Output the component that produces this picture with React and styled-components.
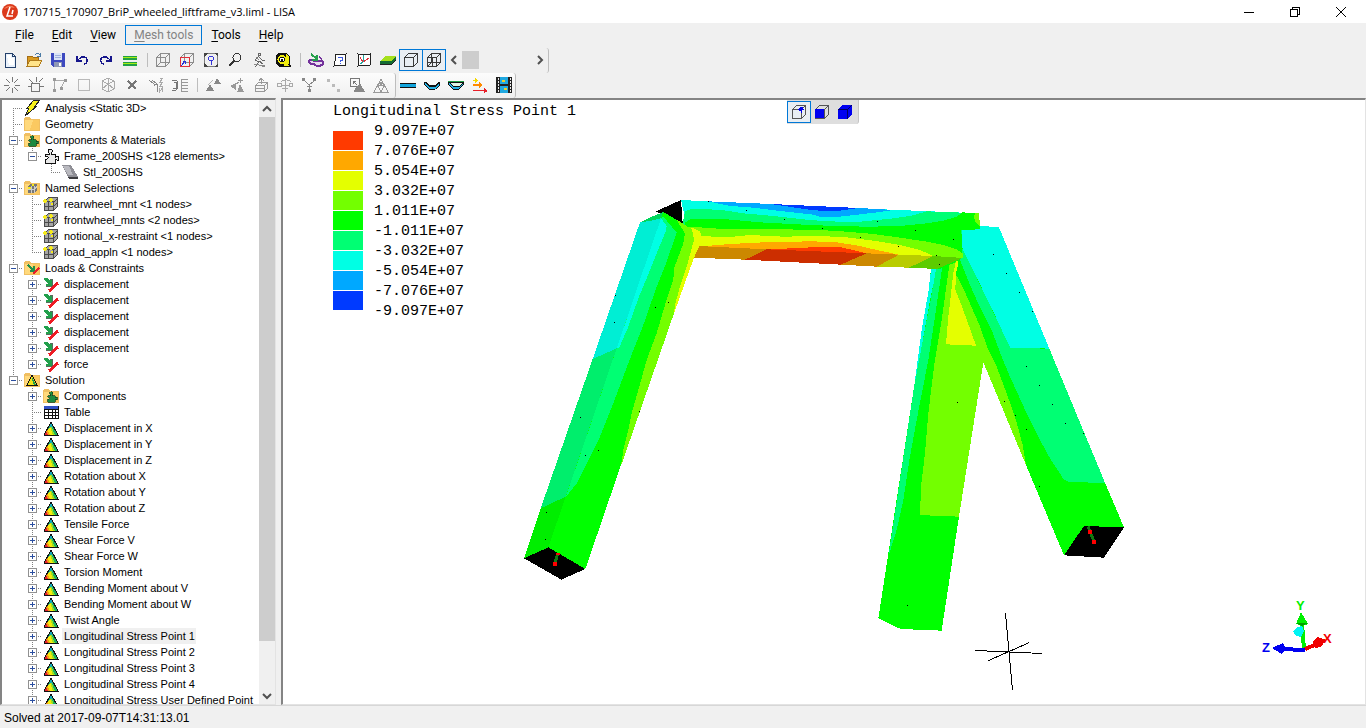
import React, { useState } from 'react';
import styled, { createGlobalStyle, css } from 'styled-components';

const GlobalStyle = createGlobalStyle`
  * { box-sizing: border-box; }
  body {
    margin: 0;
    background: #f0f0f0;
    color: #000;
    font-family: Roboto, "Liberation Sans", sans-serif;
    font-size: 12px;
    overflow: hidden;
  }
  button { font: inherit; color: inherit; padding: 0; border: 0; background: none; }
`;

const Window = styled.div`
  display: flex;
  flex-direction: column;
  height: 100vh;
`;

const TitleBar = styled.header`
  display: flex;
  align-items: center;
  flex: none;
  height: 23px;
  padding: 0 2px;
  background: #fff;
`;

const Title = styled.h1`
  flex: 1;
  margin: 0 0 0 5px;
  font-family: "Open Sans", Roboto, sans-serif;
  font-size: 11px;
  font-weight: 400;
  line-height: 16px;
`;

const WindowButton = styled.button`
  display: flex;
  align-items: center;
  justify-content: center;
  width: 46px;
  height: 20px;
`;

const MenuBar = styled.nav`
  display: flex;
  align-items: center;
  flex: none;
  height: 25px;
  padding: 0 0 1px 6px;
`;

const MenuItem = styled.button`
  height: 20px;
  padding: 0 8px;
  border: 1px solid ${p => (p.$active ? '#0078d7' : 'transparent')};
  color: ${p => (p.$active ? '#838383' : '#000')};
  line-height: 18px;
  u { text-underline-offset: 2px; }
`;

const ToolRow = styled.div`
  display: flex;
  flex: none;
  gap: 3px;
  height: 25px;
`;

const Strip = styled.div`
  display: flex;
  align-items: center;
  padding: 0 ${p => p.$right || 0}px 2px ${p => p.$left || 0}px;
  border-right: 1px solid #bdbdbd;
  border-radius: 0 3px 3px 0;
  background: ${p => (p.$flat ? '#f0f0f0' : 'linear-gradient(#fcfcfc, #f0f0f0)')};
`;

const ToolGroup = styled.div`
  display: flex;
  gap: ${p => (p.$tight ? 0 : 6)}px;
  margin-left: ${p => (p.$tight ? 2 : 0)}px;
`;

const ToolButton = styled.button`
  display: flex;
  align-items: center;
  justify-content: center;
  width: 18px;
  height: 22px;
  ${p => p.$boxed && css`
    width: 24px;
    border: 1px solid ${p.$on ? '#0078d7' : 'transparent'};
    background: ${p.$on ? '#e9eef3' : 'transparent'};
    &:not(:first-child) { margin-left: -1px; }
  `}
`;

const Separator = styled.div`
  width: 1px;
  height: 14px;
  margin: 0 6px 0 8px;
  background: #bdbdbd;
`;

const Slider = styled.div`
  display: flex;
  align-items: center;
  justify-content: space-between;
  width: 102px;
  height: 20px;
`;

const SliderTrack = styled.div`
  flex: 1;
  height: 18px;
`;

const SliderThumb = styled.div`
  width: 17px;
  height: 18px;
  background: #cdcdcd;
`;

const ArrowButton = styled.button`
  display: flex;
  align-items: center;
  justify-content: center;
  width: 16px;
  height: 17px;
`;

const Workspace = styled.main`
  display: flex;
  flex: 1;
  min-height: 0;
  gap: 5px;
`;

const Sunken = styled.section`
  border: 2px solid;
  border-width: 2px 1px 1px 2px;
  border-color: #848484 #e3e3e3 #e3e3e3 #848484;
  background: #fff;
  overflow: hidden;
`;

const TreePanel = styled(Sunken)`
  display: flex;
  flex: none;
  width: 276px;
`;

const Tree = styled.ul`
  flex: 1;
  margin: 0;
  padding: 0 0 0 2px;
  overflow: hidden;
  list-style: none;
`;

const TreeRow = styled.li`
  display: flex;
  height: 16px;
  white-space: nowrap;
`;

const dotsV = 'repeating-linear-gradient(#808080 0 1px, transparent 1px 2px)';
const dotsH = 'repeating-linear-gradient(90deg, #808080 0 1px, transparent 1px 2px)';

const lines = {
  none: 'none',
  pass: `${dotsV} 9px 0 / 1px 16px no-repeat`,
  first: `${dotsV} 9px 8px / 1px 8px no-repeat, ${dotsH} 9px 8px / 10px 1px no-repeat`,
  tee: `${dotsV} 9px 0 / 1px 16px no-repeat, ${dotsH} 9px 8px / 10px 1px no-repeat`,
  end: `${dotsV} 9px 0 / 1px 9px no-repeat, ${dotsH} 9px 8px / 10px 1px no-repeat`,
};

const Guide = styled.span`
  display: flex;
  flex: none;
  align-items: center;
  justify-content: center;
  width: 19px;
  height: 16px;
  padding-top: 1px;
  background: ${p => lines[p.$line]};
`;

const Expander = styled.button`
  display: flex;
  width: 9px;
  height: 9px;
  background: #fff;
`;

const TreeIcon = styled.span`
  display: flex;
  flex: none;
  width: 16px;
  margin: 0 3px 0 1px;
`;

const TreeLabel = styled.span`
  padding: 0 1px 0 2px;
  font-family: "Liberation Sans", sans-serif;
  font-size: 11px;
  line-height: 16px;
  background: ${p => (p.$selected ? '#f0f0f0' : 'transparent')};
`;

const ScrollBar = styled.div`
  display: flex;
  flex-direction: column;
  flex: none;
  width: 16px;
  background: #f0f0f0;
`;

const ScrollTrack = styled.div`
  flex: 1;
`;

const ScrollThumb = styled.div`
  height: 92%;
  background: #cdcdcd;
`;

const Viewport = styled(Sunken)`
  position: relative;
  flex: 1;
  min-width: 0;
  padding: 2px 0 0 50px;
`;

const Model = styled.svg`
  position: absolute;
  inset: 0;
  width: 100%;
  height: 100%;
`;

const Legend = styled.div`
  position: relative;
  font-family: "Liberation Mono", monospace;
  font-size: 15px;
  line-height: 20px;
`;

const LegendBody = styled.div`
  display: flex;
  gap: 11px;
`;

const LegendTitle = styled.div`
  height: 20px;
`;

const Swatches = styled.div`
  padding-top: 9px;
`;

const Swatch = styled.div`
  width: 30px;
  height: 19px;
  margin-bottom: 1px;
  background: ${p => p.$color};
`;

const ViewBar = styled.div`
  position: absolute;
  top: 0;
  left: 504px;
  display: flex;
  align-items: center;
  height: 24px;
  padding-right: 1px;
  border-right: 1px solid #c4c4c4;
  border-radius: 0 0 3px 0;
  background: #dedede;
`;

const StatusBar = styled.footer`
  flex: none;
  height: 23px;
  padding: 0 4px;
  border-top: 1px solid #d7d7d7;
  font-family: "Liberation Sans", sans-serif;
  font-size: 12px;
  line-height: 24px;
`;

const Pic = ({ children, size = 16, smooth }) => (
  <svg width={size} height={size} viewBox="0 0 16 16" fill="none" aria-hidden="true"
    shapeRendering={smooth ? 'auto' : 'crispEdges'}>
    {children}
  </svg>
);

const cubeLines = 'M1.5 5.5h9v9h-9zM1.5 5.5l4-4h9l-4 4M14.5 1.5v9l-4 4';
const puzzle = 'M2 6h4V5L5 4V2l1-1h2l1 1v2L8 5v1h4v3h1l1-1h1v4h-1l-1-1h-1v4H2v-4h2l1-1V9L4 8H2z';
const folder = (
  <>
    <path d="M0 3l1-2h5l1 2h9v12H0z" fill="#f0bf62" />
    <path d="M1 4h14v10H1z" fill="#ffd97c" />
    <path d="M9 4h6v10H6z" fill="#fbc961" />
  </>
);

const icons = {
  new: (
    <>
      <path d="M3 1h7l3 3v11H3z" fill="#e9f1fb" stroke="#24406b" />
      <path d="M5 3h4v3h3v7H7z" fill="#fff" />
      <path d="M10 1v3h3" stroke="#24406b" />
    </>
  ),
  open: (
    <>
      <path d="M1 4h5l1 1h5v9H1z" fill="#d99a20" stroke="#a36c14" />
      <path d="M4 8h12l-3 6H1z" fill="#ffe48a" stroke="#b07c1c" />
      <path d="M9 3c1-2 3-2 5 0m0-2v3h-3" stroke="#4b7ba5" />
    </>
  ),
  save: (
    <>
      <path d="M1 1h14v14H3l-2-2z" fill="#3d49c0" />
      <path d="M4 1h8v7H4z" fill="#dbe4f7" />
      <path d="M5 3h6M5 5h6" stroke="#9fb0dc" />
      <path d="M4 10h8v5H4z" fill="#8e97b5" />
      <path d="M9 11h2v3H9z" fill="#fff" />
    </>
  ),
  undo: <path d="M3 4v5h5M3 9l3-3c3-2 6-1 7 1 1 3-1 5-3 5" stroke="#15158c" strokeWidth="1.4" />,
  redo: <path d="M13 4v5H8m5 0l-3-3C7 4 4 5 3 7c-1 3 1 5 3 5" stroke="#15158c" strokeWidth="1.4" />,
  equals: (
    <>
      <path d="M1 4h14v4H1zM1 10h14v4H1z" fill="#22a046" />
      <path d="M1 5h14v1H1zM1 11h14v1H1z" fill="#a6ee12" />
    </>
  ),
  wire: <path d={cubeLines + 'M5.5 1.5v9h9M5.5 10.5l-4 4'} stroke="#8c8c8c" />,
  wireRed: (
    <>
      <path d={cubeLines + 'M5.5 1.5v9h9'} stroke="#8c8c8c" />
      <path d="M1.5 5.5h9v9h-9z" stroke="#e0303a" />
      <path d="M2 14l4-5M6 12V9H4" stroke="#2230e0" />
    </>
  ),
  fit: (
    <>
      <path d="M1.5 1.5h13v13h-13z" stroke="#7b7b7b" />
      <path d="M1 1h4L1 5zM15 1h-4l4 4zM1 15h4l-4-4zM15 15h-4l4-4z" fill="#444" />
      <circle cx="8" cy="6.5" r="2.5" stroke="#3434d8" />
      <path d="M8 9v4" stroke="#3434d8" />
    </>
  ),
  zoom: (
    <>
      <circle cx="10" cy="5.5" r="4" stroke="#333" />
      <path d="M7 9l-5 5" stroke="#333" strokeWidth="2" />
    </>
  ),
  walk: (
    <>
      <path d="M7 1.5h2v2H7zM8 4l-4 4 4 2-4 5M8 5l3 3h3M8 9l4 3" stroke="#666" />
      <path d="M3 12l5 1 6 1-3 1M5 5l3 3" stroke="#888" />
    </>
  ),
  tape: (
    <>
      <path d="M3 1h8l4 4v8h1v2H5l-4-3V4z" fill="#111" />
      <path d="M11 2l3 3v6l-2 2 3 1H9z" fill="#f2ee10" />
      <circle cx="7" cy="7.5" r="4.5" fill="#f2ee10" />
      <circle cx="7" cy="7.5" r="2.500" fill="#fff" stroke="#111" />
      <path d="M6 7h2v2H6z" fill="#111" />
    </>
  ),
  mask: (
    <>
      <path d="M1 9c2-2 4 0 7 0s6-1 7 1-2 4-5 4-3-2-5-2-5-1-4-3z" fill="#e8dcf0" stroke="#73329b" strokeWidth="2" />
      <path d="M3 2l6 5M9 3v5H4" stroke="#26a04c" strokeWidth="2" />
      <path d="M11 4l3 4" stroke="#73329b" />
    </>
  ),
  ask: (
    <>
      <path d="M3 2l4 1 7-1-1 5 1 5-1 2-5-1-6 1 1-5z" fill="#fff" stroke="#222" />
      <path d="M6 5h4v3H8v2M8 11v1" stroke="#3c5be0" />
    </>
  ),
  plot: (
    <>
      <path d="M2 2l5 1 7-1v5l1 5-2 2-5-1-6 1 1-5z" fill="#fff" stroke="#222" />
      <path d="M4 5l3 5 6-4" stroke="#e0303a" />
      <path d="M7 3v7l-3 2" stroke="#22a8a0" />
    </>
  ),
  slab: (
    <>
      <path d="M5 4h11l-4 5H0z" fill="#a5e01c" />
      <path d="M0 9h12l4-5v3l-4 5H0z" fill="#146b32" />
      <path d="M0 12h12l4-5v1l-4 5H0z" fill="#222" />
    </>
  ),
  cube: <path d={cubeLines} stroke="#3a3a3a" />,
  cubeAll: <path d={cubeLines + 'M5.5 1.5v9h9M5.5 10.5l-4 4M1.5 10h9M6 5.5v9'} stroke="#3a3a3a" />,
  burst: <path d="M8 0v5M8 11v5M0 8h5M11 8h5M2 2l4 4M14 2l-4 4M2 14l4-4M14 14l-4-4" stroke="#777" />,
  burstBox: (
    <>
      <path d="M3.5 6.5h8v8h-8z" stroke="#777" />
      <path d="M8 0v5M1 2l4 4M15 1l-4 4M12 9h4M0 9h3" stroke="#777" />
    </>
  ),
  poly: (
    <>
      <path d="M3 3h10M3 3l-1 10M13 3L9 11" stroke="#aaa" />
      <path d="M1 1h3v3H1zM12 2h3v3h-3zM1 12h3v3H1zM8 10h3v3H8z" fill="#999" />
    </>
  ),
  square: <path d="M2.5 2.5h11v11h-11z" stroke="#b9b9b9" />,
  hex: <path d="M8 1l6 3v8l-6 3-6-3V4zM2 4l6 3 6-3M8 1v14M2 12l6-5 6 5" stroke="#ababab" />,
  cross: <path d="M4 4l8 8M12 4l-8 8" stroke="#777" strokeWidth="1.5" />,
  fork: (
    <>
      <path d="M1 3l5 4h3M4 3l5 4v8M6 7v2" stroke="#888" />
      <path d="M11.5 1.500h3l-3 4h3l-3 4h3M11.500 11v4l3-4v4" stroke="#aaa" />
    </>
  ),
  comb: (
    <>
      <path d="M0 3h4l2 2-1 3 1 3-2 2H0M2 5h2v6H1" stroke="#777" />
      <path d="M9 2h7M9 5h7M9 8h7M9 11h7M9 14h7M9.5 2v12" stroke="#999" />
    </>
  ),
  tri1: (
    <>
      <path d="M12 1l4 6H9zM5 7l4 7H1z" fill="#888" />
      <path d="M8 3L3 8" stroke="#b5b5b5" />
    </>
  ),
  tri2: (
    <>
      <path d="M1 9l6-3v7zM11 7l4 8H8z" fill="#999" />
      <path d="M11.500 1v5M9 3.500h5M7 7l3-2" stroke="#999" />
    </>
  ),
  box: <path d="M2.5 8.5h9v6h-9zM2.5 8.5l3-3h9l-3 3M14.5 5.5v6l-3 3M8.500 1v6M6 3.500l2-2 3 2M2 11.5h9" stroke="#999" />,
  spin: <path d="M.5 6.500h4v3h-4zM8.5 1v14M12.500 6.500h3v3h-3zM5 8.500h7M4 5c2-3 8-3 10 0M5 11.500h6" stroke="#aaa" />,
  merge: (
    <>
      <path d="M1 1h3v3H1zM12 1h3v3h-3zM7 12h3v3H7z" fill="#888" />
      <path d="M4 4l4 4 5-4M8.500 8v4M6 9.500h5" stroke="#888" />
    </>
  ),
  dots: <path d="M2 2h3v3H2zM7 7h3v3H7zM12 12h3v3h-3z" fill="#bbb" />,
  copy: (
    <>
      <path d="M1.5 1.5h9v8h-9zM4 4l4 4M4.500 7V4.500H7" stroke="#777" />
      <path d="M6 11l5-5 5 9H5z" fill="#888" />
    </>
  ),
  meshTri: <path d="M8 2l7 13H1zM4.5 8.5h7M8 15L4.5 8.5M8 15l3.5-6.5M6 5h4L8 8z" stroke="#999" />,
  bar: (
    <>
      <path d="M0 6h16v5H0z" fill="#111" />
      <path d="M0 7h16v3H0z" fill="#12a4dc" />
    </>
  ),
  sag: (
    <>
      <path d="M0 5h2l3 3h6l3-3h2v3l-4 4-2 1H6l-2-1-4-4z" fill="#111" />
      <path d="M1 6l4 4h6l4-4v2l-4 4H5L1 8z" fill="#25b2e6" />
    </>
  ),
  sagFull: (
    <>
      <path d="M0 4h16v3l-4 5-2 1H6l-2-1-4-5z" fill="#111" />
      <path d="M2 6h12l-3 3H5z" fill="#dff5e3" />
      <path d="M0 4h16v1H0z" fill="#22a046" />
      <path d="M1 6l4 4h6l4-4v1l-4 5H5L1 7z" fill="#25b2e6" />
    </>
  ),
  arrows: (
    <>
      <path d="M1 3h2V1l3 2-3 3V4H1z" fill="#f5d800" />
      <path d="M1 7h6V5l4 3-4 3V9H1z" fill="#ff8a00" />
      <path d="M1 13h11v-2l4 3-4 2v-2H1z" fill="#e8202a" />
    </>
  ),
  film: (
    <>
      <path d="M0 0h16v16H0z" fill="#222" />
      <path d="M4 0h8v7H4zM4 9h8v7H4z" fill="#20a8e0" />
      <path d="M2 1v14M14 1v14" stroke="#eee" strokeDasharray="2 1" />
      <path d="M6 3h3v2H6zM8 11h3v2H8z" fill="#f0d028" />
    </>
  ),
  cubeNode: (
    <>
      <path d={cubeLines} stroke="#555" />
      <circle cx="10" cy="5" r="2" fill="#0000e8" />
      <path d="M7 5h6M10 5v4" stroke="#0000e8" />
    </>
  ),
  cubeFace: (
    <>
      <path d={cubeLines} stroke="#555" />
      <path d="M1 5h9v9H1z" fill="#0000f0" />
    </>
  ),
  cubeSolid: (
    <>
      <path d="M1 5l4-4h10v9l-4 5H1z" fill="#0000f0" />
      <path d="M1 5.5h9.5L15 1M10.5 5.5V15" stroke="#000060" />
    </>
  ),
  bolt: (
    <path d="M10 0h6l-5 6h2L1 16l4-8H3z" fill="#f6f01a" stroke="#222" />
  ),
  folder,
  folderPart: (
    <>
      {folder}
      <path d={puzzle} transform="translate(3 3) scale(.75)" fill="#1c8a40" stroke="#0d3d1c" />
    </>
  ),
  part: <path d={puzzle} fill="#e9e9e9" stroke="#111" />,
  plate: (
    <>
      <path d="M0 1h9l7 12H6z" fill="#8f8f96" />
      <path d="M1 2h6l4 9H6z" fill="#b9b9bf" />
      <path d="M6 13h10v2H7z" fill="#3c3c40" />
    </>
  ),
  folderSel: (
    <>
      {folder}
      <path d="M4 6l2-2h7v6l-3 3H4z" fill="#777" />
      <path d="M4 9.500h6l3-3M7.500 6v7M10.500 6v7" stroke="#ccc" />
      <path d="M4 7h3v2H4zM8 4h2v2H8z" fill="#f5ea1c" />
    </>
  ),
  sel: (
    <>
      <path d="M1 5l4-4h10v9l-5 5H1z" fill="#4b4b4b" />
      <path d="M2 6h3v4H2zM6 6h4v4H6zM2 11h3v3H2zM6 11h4v3H6zM11 6l3-3v3l-3 3zM11 10l3-3v3l-3 3zM5 2h9l-3 3H3z" fill="#a5a5a5" />
      <path d="M1 3h2v1h1v2H3v1H1V6H0V4h1zM7 2h2v1h1v2H9v1H7V5H6V3h1zM8 7h2v2H8z" fill="#f5ea1c" />
    </>
  ),
  folderLoad: (
    <>
      {folder}
      <path d="M4 5l5 5M9.500 6v4.500H6" stroke="#22914a" strokeWidth="2" />
      <path d="M15 8l-6 6" stroke="#e8202a" strokeWidth="2" />
    </>
  ),
  load: (
    <>
      <path d="M1 2h3l3 3V3h2v7H3V8h2L1 4z" fill="#22a04c" />
      <path d="M7 3h2v7H3" stroke="#5a6b5e" />
      <path d="M15 7l-9 8" stroke="#ee1c24" strokeWidth="3" />
    </>
  ),
  folderSol: (
    <>
      {folder}
      <path d="M8 3l5 10H3z" fill="#f2e21a" stroke="#111" />
      <path d="M8 5l4 8h-2L8 8z" fill="#22a04c" />
    </>
  ),
  table: (
    <>
      <path d="M1 2h14v12H1z" fill="#fff" stroke="#111" />
      <path d="M1 2h14v3H1z" fill="#3150c4" />
      <path d="M1 5.5h14M1 8.5h14M1 11.5h14M5.5 5v9M9.5 5v9M12.5 5v9" stroke="#111" />
    </>
  ),
  tri: (
    <>
      <path d="M8 2l7 13H1z" fill="#1cb060" />
      <path d="M8 3l2 5H6z" fill="#12a8b8" />
      <path d="M8 6l4 9H4z" fill="#9be01c" />
      <path d="M7 7l3 8H3l2-5z" fill="#f5ea0c" />
      <path d="M4 9l3 6H2z" fill="#f59a14" />
      <path d="M3 11l2 4H1z" fill="#e02030" />
      <path d="M8 2l7 13M8 2L1 15M1 15.500h15" stroke="#111" />
    </>
  ),
};

const Chevron = ({ dir }) => {
  const d = { left: 'M7 1L3 5l4 4', right: 'M3 1l4 4-4 4', up: 'M1 7l4-4 4 4', down: 'M1 3l4 4 4-4' }[dir];
  return (
    <svg width="10" height="10" viewBox="0 0 10 10" fill="none" stroke="#505050" strokeWidth="2">
      <path d={d} />
    </svg>
  );
};

const Tools = ({ names, boxed, on }) =>
  names.map(n => (
    <ToolButton key={n} type="button" aria-label={n} $boxed={boxed} $on={boxed && (!on || on === n)}>
      <Pic>{icons[n]}</Pic>
    </ToolButton>
  ));

const results = [
  'Displacement in X', 'Displacement in Y', 'Displacement in Z',
  'Rotation about X', 'Rotation about Y', 'Rotation about Z',
  'Tensile Force', 'Shear Force V', 'Shear Force W', 'Torsion Moment',
  'Bending Moment about V', 'Bending Moment about W', 'Twist Angle',
  'Longitudinal Stress Point 1', 'Longitudinal Stress Point 2',
  'Longitudinal Stress Point 3', 'Longitudinal Stress Point 4',
  'Longitudinal Stress User Defined Point',
];

const leaf = (icon, label, more) => ({ icon, label, ...more });

const tree = [
  leaf('bolt', 'Analysis <Static 3D>'),
  leaf('folder', 'Geometry'),
  leaf('folderPart', 'Components & Materials', {
    kids: [leaf('part', 'Frame_200SHS <128 elements>', { kids: [leaf('plate', 'Stl_200SHS')] })],
  }),
  leaf('folderSel', 'Named Selections', {
    kids: ['rearwheel_mnt <1 nodes>', 'frontwheel_mnts <2 nodes>', 'notional_x-restraint <1 nodes>', 'load_appln <1 nodes>']
      .map(t => leaf('sel', t)),
  }),
  leaf('folderLoad', 'Loads & Constraints', {
    kids: ['displacement', 'displacement', 'displacement', 'displacement', 'displacement', 'force']
      .map(t => leaf('load', t, { closed: true })),
  }),
  leaf('folderSol', 'Solution', {
    kids: [
      leaf('folderPart', 'Components', { closed: true }),
      leaf('table', 'Table'),
      ...results.map(t => leaf('tri', t, { closed: true })),
    ],
  }),
];

// turn the nested tree into rows, each with its guide lines
function flatten(nodes, shut, guides = [], path = '') {
  return nodes.flatMap((n, i) => {
    const last = i === nodes.length - 1;
    const id = path + '/' + i;
    const own = !path && i === 0 ? 'first' : last ? 'end' : 'tee';
    const row = { ...n, id, guides: [...guides, own] };
    if (!n.kids || shut[id]) return [row];
    return [row, ...flatten(n.kids, shut, [...guides, last ? 'none' : 'pass'], id)];
  });
}

const legend = ['#ff3a00', '#ffa800', '#e4ff00', '#73ff00', '#00ff00', '#00ff73', '#00ffe4', '#00a8ff', '#003aff'];
const values = ['9.097E+07', '7.076E+07', '5.054E+07', '3.032E+07', '1.011E+07', '-1.011E+07', '-3.032E+07', '-5.054E+07', '-7.076E+07', '-9.097E+07'];

const P = ({ c, p }) => <polygon fill={c} points={p} />;
const Dots = ({ at }) => at.map(([x, y]) => <rect key={x + '-' + y} x={x - 1} y={y - 1} width="3" height="3" fill="#000" />);

const Frame = () => (
  <Model viewBox="283 100 1081 604" preserveAspectRatio="xMinYMin meet" shapeRendering="crispEdges">
    {/* middle leg and far right leg */}
    <g transform="translate(860 220) scale(.33333)">
      <P c="#00ff00" p="213,148 200,260 163,495 55,1195 90,1212 122,1227 245,1232 297,890 370,427 330,240 300,110 245,120" />
      <P c="#00ffe4" p="213,148 230,148 212,230 185,380 163,495 185,330 206,210" />
      <P c="#00ff73" p="228,148 246,145 228,270 205,420 170,600 148,720 130,840 110,930 85,1010 163,495 185,380 212,240" />
      <P c="#73ff00" p="268,135 245,300 222,440 205,580 195,700 183,800 180,885 240,888 297,890 370,427 330,300 285,150 296,122" />
      <P c="#00ff00" p="300,118 285,165 330,250 380,380 498,735 612,1006 792,922 735,788 568,386 417,22 360,18 303,30" />
      <P c="#73ff00" p="286,165 286,200 320,290 370,427 498,735 488,675 468,600 440,520 410,440 385,390 358,315 330,250 310,205 292,170" />
      <P c="#e4ff00" p="288,122 296,125 288,160 286,210 306,260 326,315 348,377 258,373 264,300 272,230 280,160" />
      <P c="#00ff73" p="303,80 300,120 330,195 350,240 395,330 425,410 450,470 500,580 540,660 570,715 590,745 610,777 630,787 735,788 568,386 452,384 312,95" />
      <P c="#00ffe4" p="303,30 360,28 360,18 380,19 417,22 568,386 510,384 452,384 430,340 400,275 312,95 305,80" />
      <P c="#000" p="672,918 792,922 732,1013 612,1006" />
      <path d="M684 920l18 44" stroke="#107810" strokeWidth="9" />
      <path d="M684 930h12v12h-12zM696 960h12v12h-12z" fill="#f00" />
      <Dots at={[[400, 103], [439, 160], [478, 217], [517, 274], [499, 439], [538, 496], [577, 553], [616, 610], [670, 640], [433, 544], [466, 586], [499, 628], [538, 799], [292, 547], [142, 1156]]} />
    </g>
    {/* cross beam */}
    <g transform="translate(660 190) scale(.33333)">
      <P c="#00ffe4" p="63,30 145,34 500,51 957,70 960,118 904,120 908,190 100,190" />
      <P c="#00a8ff" p="145,34 210,48 270,52 370,64 460,74 480,80 540,80 600,73 660,66 700,60 597,54 333,42" />
      <P c="#003aff" p="333,42 400,52 440,58 480,62 540,62 580,56 597,54" />
      <P c="#00ff73" p="68,98 75,65 90,58 150,58 200,62 250,70 330,77 430,88 500,94 590,96 650,90 700,85 760,76 800,64 905,68 908,204 100,200" />
      <P c="#00ff00" p="75,98 90,88 200,88 300,97 450,105 550,109 640,110 730,107 800,100 850,92 890,80 908,67 957,70 960,118 904,120 908,204 100,200" />
      <P c="#73ff00" p="85,112 120,112 200,118 370,118 480,120 560,125 640,132 720,143 800,155 850,165 890,178 908,190 908,204 100,200" />
      <P c="#73ff00" p="945,69 957,70 960,108 945,95 942,80" />
      <P c="#e4ff00" p="92,112 122,128 122,138 200,142 270,135 370,140 480,138 560,142 640,152 720,165 780,180 820,198 100,200" />
      <P c="#ffa800" p="108,172 140,168 210,162 330,156 460,154 530,157 600,168 650,180 717,194 620,190 320,178 115,170" />
      <P c="#ff3a00" p="320,178 420,174 470,171 540,171 570,178 620,190" />
      <P c="#cc8800" p="113,168 320,178 255,209 100,203" />
      <P c="#cc2e00" p="320,178 620,190 542,224 255,209" />
      <P c="#cc8800" p="620,190 717,194 650,230 542,224" />
      <P c="#b9cc00" p="717,194 820,198 747,233 650,230" />
      <P c="#5ccc00" p="820,198 908,204 830,237 747,233" />
      <P c="#000" p="-14,65 63,30 68,100 0,70" />
      <Dots at={[[145, 34], [259, 61], [373, 88], [487, 115], [601, 142], [715, 169], [829, 196], [652, 94], [766, 121], [880, 148], [838, 223]]} />
    </g>
    {/* left leg */}
    <g transform="translate(500 190) scale(.33333)">
      <P c="#00ff00" p="490,66 420,97 72,1105 145,1072 256,1137 363,825 522,370 582,203 600,150 575,118 548,100" />
      <P c="#00eed4" p="420,97 455,90 483,85 430,250 350,475 278,507" />
      <P c="#00ee6c" p="278,507 350,475 197,920 122,955" />
      <P c="#00ee00" p="122,955 197,920 145,1072 72,1105" />
      <P c="#00d65c" p="420,97 450,82 490,66 483,85 455,92" />
      <P c="#00ff73" p="483,85 490,80 530,128 500,215 470,290 430,405 400,480 385,520 355,600 330,665 300,740 265,810 230,880 197,922 350,475" />
      <P c="#00ffe4" p="483,85 500,108 497,125 470,190 440,265 415,325 385,410 358,472 350,475 400,330 430,240" />
      <P c="#73ff00" p="490,66 530,90 555,130 550,160 522,235 520,270 495,345 470,430 440,510 415,600 395,670 385,720 370,780 363,828 522,370 582,203 590,150 575,118 548,100" />
      <P c="#e4ff00" p="575,112 582,150 575,175 560,230 540,290 525,345 522,370 582,203 600,165 600,125" />
      <P c="#000" p="72,1105 145,1072 256,1137 184,1169" />
      <path d="M173 1092l-9 30" stroke="#107810" strokeWidth="9" />
      <path d="M168 1089h12v6h-12zM159 1116h12v12h-12z" fill="#f00" />
      <Dots at={[[346, 316], [343, 397], [466, 352], [505, 337], [418, 664], [241, 682], [256, 796], [295, 781], [139, 967], [136, 1048]]} />
    </g>
    {/* rotation centre */}
    <path d="M1005.5 613.5L1012.5 690.5M975.5 650.5L1042.5 653.5M988.5 660.5L1029.5 642.5" stroke="#000" fill="none" />
    {/* axes */}
    <g fontFamily="Liberation Sans, sans-serif" fontSize="13" fontWeight="700">
      <path d="M1304 649l-2-25" stroke="#00f000" strokeWidth="4" />
      <path d="M1301 612l7 12-6 2-6-2z" fill="#00f000" />
      <path d="M1296 623h12l-6 3z" fill="#00a000" />
      <path d="M1293 631l4-4 5-1 2 5-3 6-5-1z" fill="#00f4f4" />
      <path d="M1305 649l12-5" stroke="#f00000" strokeWidth="4" />
      <path d="M1313 641l5-4 8 3-5 7-6 1z" fill="#f00000" />
      <path d="M1305 650l-24-1" stroke="#0000f0" strokeWidth="4" />
      <path d="M1272 648l11-5 3 6-4 5z" fill="#0000f0" />
      <text x="1296" y="610" fill="#00f000">Y</text>
      <text x="1323" y="643" fill="#f00000">X</text>
      <text x="1262" y="652" fill="#0000f0">Z</text>
    </g>
  </Model>
);

const menus = [['File'], ['Edit'], ['View'], ['Mesh tools', true], ['Tools'], ['Help']];

export default function App() {
  const [shut, setShut] = useState({});
  const [selected, setSelected] = useState('/5/15');
  const toggle = row => row.kids && setShut(s => ({ ...s, [row.id]: !s[row.id] }));

  return (
    <Window>
      <GlobalStyle />
      <TitleBar>
        <Pic smooth>
          <circle cx="8" cy="8" r="8" fill="#dc3a1c" />
          <path d="M2 5a7 7 0 0 1 11-1l-6-1z" fill="#f4825c" />
          <path d="M8 3L5 12h6M11 6l-1 4" stroke="#fff" strokeWidth="1.5" />
        </Pic>
        <Title>170715_170907_BriP_wheeled_liftframe_v3.liml - LISA</Title>
        <WindowButton type="button" aria-label="Minimize">
          <svg width="10" height="10" shapeRendering="crispEdges"><path d="M0 5.5h10" stroke="#000" /></svg>
        </WindowButton>
        <WindowButton type="button" aria-label="Restore">
          <svg width="10" height="10" fill="none" stroke="#000" shapeRendering="crispEdges"><path d="M.5 2.5h7v7h-7zM2.5 2.5v-2h7v7h-2" /></svg>
        </WindowButton>
        <WindowButton type="button" aria-label="Close">
          <svg width="10" height="10" stroke="#000"><path d="M0 0l10 10M10 0L0 10" /></svg>
        </WindowButton>
      </TitleBar>
      <MenuBar>
        {menus.map(([m, active]) => (
          <MenuItem key={m} type="button" $active={active}><u>{m[0]}</u>{m.slice(1)}</MenuItem>
        ))}
      </MenuBar>
      <ToolRow>
        <Strip $flat $left={1}>
          <ToolGroup><Tools names={['new', 'open', 'save', 'undo', 'redo', 'equals']} /></ToolGroup>
          <Separator />
          <ToolGroup><Tools names={['wire', 'wireRed', 'fit', 'zoom', 'walk', 'tape']} /></ToolGroup>
          <Separator />
          <ToolGroup><Tools names={['mask', 'ask', 'plot', 'slab']} /></ToolGroup>
          <ToolGroup $tight><Tools boxed names={['cube', 'cubeAll']} /></ToolGroup>
          <Slider>
            <ArrowButton type="button" aria-label="Scroll left"><Chevron dir="left" /></ArrowButton>
            <SliderTrack><SliderThumb /></SliderTrack>
            <ArrowButton type="button" aria-label="Scroll right"><Chevron dir="right" /></ArrowButton>
          </Slider>
        </Strip>
      </ToolRow>
      <ToolRow>
        <Strip $left={3} $right={5}>
          <ToolGroup><Tools names={['burst', 'burstBox', 'poly', 'square', 'hex', 'cross', 'fork', 'comb']} /></ToolGroup>
          <Separator />
          <ToolGroup><Tools names={['tri1', 'tri2', 'box', 'spin', 'merge', 'dots', 'copy', 'meshTri']} /></ToolGroup>
        </Strip>
        <Strip $right={2}>
          <ToolGroup><Tools names={['bar', 'sag', 'sagFull', 'arrows', 'film']} /></ToolGroup>
        </Strip>
      </ToolRow>
      <Workspace>
        <TreePanel>
          <Tree>
            {flatten(tree, shut).map(row => (
              <TreeRow key={row.id} onClick={() => setSelected(row.id)}>
                {row.guides.map((g, i) => (
                  <Guide key={i} $line={g}>
                    {i === row.guides.length - 1 && (row.kids || row.closed) && (
                      <Expander type="button" aria-label="Expand" onClick={() => toggle(row)}>
                        <svg width="9" height="9" fill="none" shapeRendering="crispEdges">
                          <path d="M.5.5h8v8h-8z" stroke="#919191" />
                          <path d={row.kids && !shut[row.id] ? 'M2 4.5h5' : 'M2 4.5h5M4.5 2v5'} stroke="#2b4fa0" />
                        </svg>
                      </Expander>
                    )}
                  </Guide>
                ))}
                <TreeIcon><Pic>{icons[row.icon]}</Pic></TreeIcon>
                <TreeLabel $selected={row.id === selected}>{row.label}</TreeLabel>
              </TreeRow>
            ))}
          </Tree>
          <ScrollBar>
            <ArrowButton type="button" aria-label="Scroll up"><Chevron dir="up" /></ArrowButton>
            <ScrollTrack><ScrollThumb /></ScrollTrack>
            <ArrowButton type="button" aria-label="Scroll down"><Chevron dir="down" /></ArrowButton>
          </ScrollBar>
        </TreePanel>
        <Viewport>
          <Frame />
          <Legend>
            <LegendTitle>Longitudinal Stress Point 1</LegendTitle>
            <LegendBody>
              <Swatches>{legend.map(c => <Swatch key={c} $color={c} />)}</Swatches>
              <div>{values.map(v => <div key={v}>{v}</div>)}</div>
            </LegendBody>
          </Legend>
          <ViewBar><Tools boxed on="cubeNode" names={['cubeNode', 'cubeFace', 'cubeSolid']} /></ViewBar>
        </Viewport>
      </Workspace>
      <StatusBar>Solved at 2017-09-07T14:31:13.01</StatusBar>
    </Window>
  );
}
